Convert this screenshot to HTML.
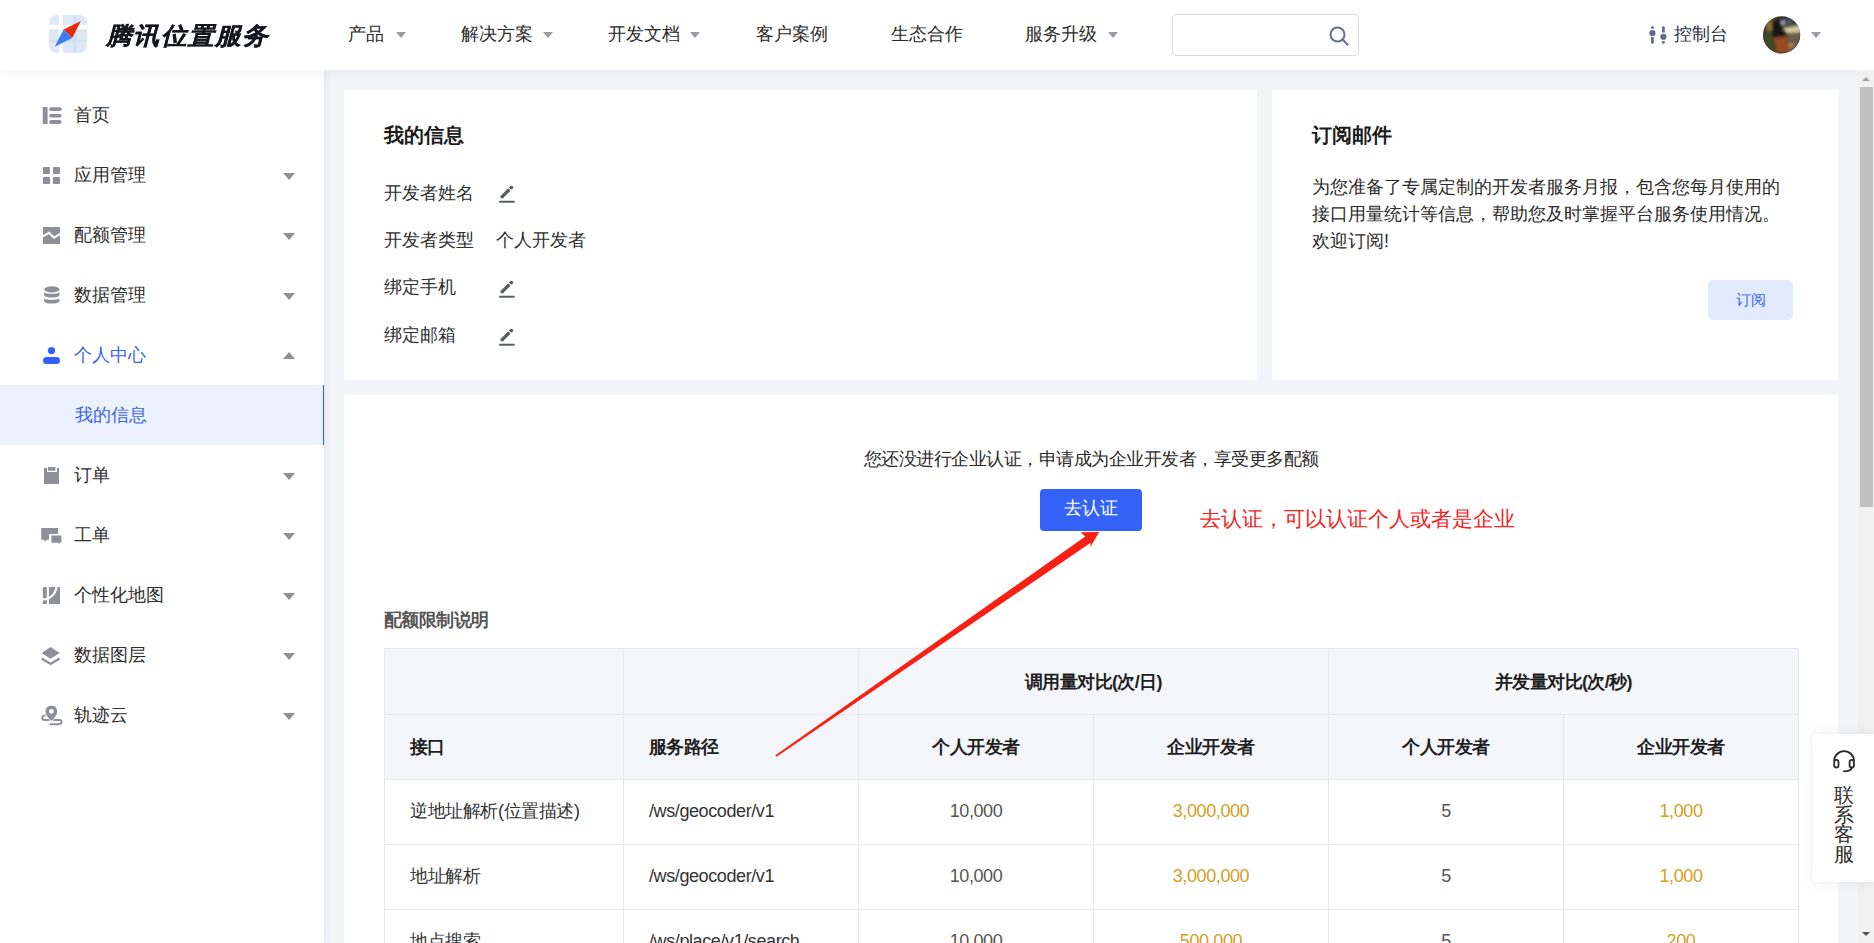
<!DOCTYPE html>
<html><head><meta charset="utf-8">
<style>
*{box-sizing:border-box;margin:0;padding:0}
html,body{width:1874px;height:943px;overflow:hidden}
body{font-family:"Liberation Sans",sans-serif;background:#f4f5f9;color:#222;position:relative}
.abs{position:absolute}
#hdr{position:absolute;left:0;top:0;width:1874px;height:70px;background:#fff;z-index:5;box-shadow:0 2px 12px rgba(30,40,80,.06)}
.nav{position:absolute;top:22px;font-size:18px;line-height:24px;color:#2a2a2a;white-space:nowrap}
.caret{position:absolute;width:0;height:0;border-left:5px solid transparent;border-right:5px solid transparent;border-top:6px solid #9a9ca3}
#side{position:absolute;left:0;top:70px;width:324px;height:873px;background:#fff;box-shadow:1px 0 3px rgba(40,50,90,.05),3px 0 8px rgba(40,50,90,.04)}
.si{position:absolute;left:0;width:324px;height:60px}
.si .t{position:absolute;left:74px;top:19px;font-size:18px;line-height:24px;color:#2e2e2e;white-space:nowrap}
.si .ic{position:absolute;left:42px;top:20px;width:20px;height:20px;overflow:visible}
.si .ca{position:absolute;left:283px;top:28.5px;width:0;height:0;border-left:6px solid transparent;border-right:6px solid transparent;border-top:7px solid #8f9197}
.card{position:absolute;background:#fff}
.t18{font-size:18px;line-height:24px;white-space:nowrap;position:absolute;color:#2e2e2e}
table{border-collapse:collapse;position:absolute;left:40px;top:253px;table-layout:fixed}
td,th{border:1px solid #e6e8ef;height:65px;font-size:18px;white-space:nowrap;letter-spacing:-0.4px}
th{letter-spacing:-0.6px}
th{background:#f5f6fa;font-weight:bold;color:#1f1f1f}
td{color:#333;padding-bottom:2px}
.num{text-align:center;color:#555}
.gold{text-align:center;color:#d4a024}
.l{text-align:left;padding-left:25px}
</style></head><body>
<div id="hdr">
  <svg class="abs" style="left:49px;top:15px" width="38" height="38" viewBox="0 0 38 38">
    <defs><linearGradient id="lg" x1="0" y1="1" x2="1" y2="0"><stop offset="0" stop-color="#e6e4f8"/><stop offset="1" stop-color="#d6ecf7"/></linearGradient>
    <clipPath id="lc"><rect x="0" y="0" width="38" height="38" rx="7.5"/></clipPath></defs>
    <g clip-path="url(#lc)">
    <rect x="0" y="0" width="38" height="38" fill="url(#lg)"/>
    <rect x="9.9" y="0" width="4.2" height="38" fill="#fbfcfe"/>
    <rect x="0" y="9.8" width="38" height="4.2" fill="#fbfcfe"/>
    <rect x="24.4" y="0" width="2.8" height="38" fill="#cddcf8"/>
    <rect x="0" y="24.8" width="38" height="2.1" fill="#c9e6f0"/>
    <rect x="24.4" y="24.8" width="2.8" height="2.1" fill="#c6e2f2"/>
    </g>
    <path d="M31.9 5.9 L14.6 14.5 L23.2 22.9 Z" fill="#e8290e"/>
    <path d="M5.7 31.8 L14.6 14.5 L23.2 22.9 Z" fill="#3f7ef8"/>
  </svg>
  <div class="abs" style="left:106px;top:20px;font-size:24px;line-height:32px;font-weight:bold;font-style:italic;color:#15171c;letter-spacing:1.5px;transform:scaleX(1.07);transform-origin:0 0;-webkit-text-stroke:0.2px #15171c;white-space:nowrap">腾讯位置服务</div>
  <div class="nav" style="left:348px">产品</div><div class="caret" style="left:396px;top:32px"></div>
  <div class="nav" style="left:461px">解决方案</div><div class="caret" style="left:543px;top:32px"></div>
  <div class="nav" style="left:608px">开发文档</div><div class="caret" style="left:690px;top:32px"></div>
  <div class="nav" style="left:756px">客户案例</div>
  <div class="nav" style="left:891px">生态合作</div>
  <div class="nav" style="left:1025px">服务升级</div><div class="caret" style="left:1108px;top:32px"></div>
  <div class="abs" style="left:1172px;top:14px;width:187px;height:42px;border:1px solid #d9dbe3;border-radius:4px"></div>
  <svg class="abs" style="left:1329px;top:26px" width="20" height="20" viewBox="0 0 20 20"><circle cx="8.5" cy="8.5" r="7" fill="none" stroke="#687190" stroke-width="2"/><path d="M13.5 13.5 L18.5 18.5" stroke="#687190" stroke-width="2.3" stroke-linecap="round"/></svg>
  <svg class="abs" style="left:1648px;top:25px" width="20" height="20" viewBox="0 0 20 20">
    <path d="M3.05 3.8 V1.9 L4.4 0.9 L5.75 1.9 V3.8 Z" fill="#636b82"/><circle cx="4.4" cy="8" r="3.1" fill="#636b82"/><path d="M3.05 12.1 H5.75 V18 L4.4 19.1 L3.05 18 Z" fill="#636b82"/>
    <path d="M14.05 7.6 V1.9 L15.4 0.9 L16.75 1.9 V7.6 Z" fill="#636b82"/><circle cx="15.4" cy="11.75" r="3.1" fill="#636b82"/><path d="M14.05 16 H16.75 V18 L15.4 19.1 L14.05 18 Z" fill="#636b82"/>
  </svg>
  <div class="nav" style="left:1674px;color:#2b3040">控制台</div>
  <svg class="abs" style="left:1763px;top:16px" width="38" height="38" viewBox="0 0 38 38">
    <defs><clipPath id="av"><circle cx="18.6" cy="18.9" r="18.6"/></clipPath><filter id="bl" x="-20%" y="-20%" width="140%" height="140%"><feGaussianBlur stdDeviation="1.6"/></filter></defs>
    <g clip-path="url(#av)"><rect x="0" y="0" width="38" height="38" fill="#3b3128"/>
    <g filter="url(#bl)">
      <path d="M0 18 L10 16 L12 38 L0 38 Z" fill="#3c4a22"/>
      <path d="M2 6 L14 2 L12 14 L4 16 Z" fill="#8a7030"/>
      <path d="M9 4 L24 2 L26 22 L14 26 L9 20 Z" fill="#141414"/>
      <path d="M11 22 L24 20 L26 36 L14 38 Z" fill="#9a4a24"/>
      <path d="M24 18 L38 14 L38 38 L26 38 Z" fill="#6a5c4a"/>
      <path d="M20 12 L38 9 L38 16 L24 17 Z" fill="#d8cc98"/>
      <circle cx="21" cy="6.5" r="2.6" fill="#e8f0ff"/><circle cx="26.5" cy="6" r="1.8" fill="#c8d4f0"/>
      <path d="M20 0 L38 0 L38 9 L20 10 Z" fill="#3a4050" opacity="0.7"/>
      <circle cx="28" cy="29" r="2" fill="#e09050"/>
    </g></g>
  </svg>
  <div class="caret" style="left:1811px;top:32px;border-top-color:#9a9ca3"></div>
</div>

<div id="side">
  <div class="si" style="top:14px"><svg class="ic" viewBox="0 0 20 20" style="left:42px;top:22px">
    <rect x="0.75" y="1" width="4.85" height="17" rx="0.5" fill="#8f9097"/>
    <rect x="7.2" y="1.3" width="12.5" height="3.8" rx="1.9" fill="#8f9097"/>
    <rect x="7.2" y="8" width="12.5" height="3.6" rx="1.8" fill="#8f9097"/>
    <rect x="7.2" y="14.1" width="12.5" height="3.9" rx="1.9" fill="#8f9097"/></svg>
    <div class="t">首页</div></div>
  <div class="si" style="top:74px"><svg class="ic" viewBox="0 0 20 20" style="left:42px;top:22px">
    <rect x="1" y="1" width="7" height="7" rx="0.8" fill="#8f9097"/><rect x="11" y="1" width="7" height="7" rx="0.8" fill="#8f9097"/>
    <rect x="1" y="11" width="7" height="7" rx="0.8" fill="#8f9097"/><rect x="11" y="11" width="7" height="7" rx="0.8" fill="#8f9097"/></svg>
    <div class="t">应用管理</div><div class="ca"></div></div>
  <div class="si" style="top:134px"><svg class="ic" viewBox="0 0 20 20" style="left:42px;top:22px">
    <rect x="1" y="1" width="17" height="17" fill="#8f9097"/>
    <path d="M-0.5 11.2 L7 6.8 L12 11.6 L19.5 7.2" fill="none" stroke="#fff" stroke-width="2.1"/></svg>
    <div class="t">配额管理</div><div class="ca"></div></div>
  <div class="si" style="top:194px"><svg class="ic" viewBox="0 0 20 20" style="left:42px;top:22px">
    <ellipse cx="9.8" cy="3.4" rx="7.6" ry="3.1" fill="#8f9097"/>
    <path d="M2.1 5.9 C3 8.4 16.6 8.4 17.5 5.9 V9.2 C16.6 12.4 3 12.4 2.1 9.2 Z" fill="#8f9097"/>
    <path d="M2.1 12.1 C3 14.6 16.6 14.6 17.5 12.1 V15.2 C16.6 18.4 3 18.4 2.1 15.2 Z" fill="#8f9097"/></svg>
    <div class="t">数据管理</div><div class="ca"></div></div>
  <div class="si" style="top:254px"><svg class="ic" viewBox="0 0 20 20" style="left:42px;top:22px">
    <circle cx="9.5" cy="4.6" r="3.6" fill="#3360fa"/>
    <rect x="1" y="11" width="17" height="7" rx="3.5" fill="#3360fa"/></svg>
    <div class="t" style="color:#3b63f0">个人中心</div><div class="ca" style="top:27.5px;border-top:0;border-bottom:7px solid #8f9197"></div></div>
  <div class="si" style="top:315px;background:#ebf1fd;border-right:1px solid #335cff"><div class="t" style="left:75px;top:18px;color:#3b63e8">我的信息</div></div>
  <div class="si" style="top:374px"><svg class="ic" viewBox="0 0 20 20" style="left:42px;top:22px">
    <path d="M2 2 H5 V6 H15 V2 H17 V18 H2 Z" fill="#8f9097"/>
    <rect x="6" y="1" width="7.4" height="3.7" fill="#8f9097"/></svg>
    <div class="t">订单</div><div class="ca"></div></div>
  <div class="si" style="top:434px"><svg class="ic" viewBox="0 0 20 20" style="left:42px;top:22px">
    <path d="M-0.8 2 H16 V8 H7 V13.7 H5 L2.4 16 V13.7 H-0.8 Z" fill="#8f9097"/>
    <path d="M9.4 9.6 H19.4 V16.7 H17.7 V18 L16 16.7 H9.4 Z" fill="#8f9097"/></svg>
    <div class="t">工单</div><div class="ca"></div></div>
  <div class="si" style="top:494px"><svg class="ic" viewBox="0 0 20 20" style="left:42px;top:22px">
    <rect x="0.8" y="1" width="4" height="17" fill="#8f9097"/>
    <rect x="6.9" y="1" width="11.1" height="17" fill="#8f9097"/>
    <path d="M14.4 0 C14.4 7 9 13 0 13.7" fill="none" stroke="#fff" stroke-width="2.2"/></svg>
    <div class="t">个性化地图</div><div class="ca"></div></div>
  <div class="si" style="top:554px"><svg class="ic" viewBox="0 0 20 20" style="left:42px;top:22px">
    <path d="M8.6 1 L17.7 6.9 L8.6 12.8 L-0.3 6.9 Z" fill="#8f9097"/>
    <path d="M-0.2 12.6 L8.6 17.9 L17.6 12.6" fill="none" stroke="#8f9097" stroke-width="2.3" stroke-linejoin="miter"/></svg>
    <div class="t">数据图层</div><div class="ca"></div></div>
  <div class="si" style="top:614px"><svg class="ic" viewBox="0 0 20 20" style="left:42px;top:22px">
    <path d="M9.35 15 C6.5 12 3.5 9 3.5 5.25 A5.85 5.85 0 0 1 15.2 5.25 C15.2 9 12.2 12 9.35 15 Z M9.4 2.9 A2.4 2.4 0 1 0 9.4 7.7 A2.4 2.4 0 1 0 9.4 2.9 Z" fill="#8f9097" fill-rule="evenodd"/>
    <path d="M3.6 9.4 C1.4 9.4 0.2 10.8 0.2 12 C0.2 13.2 1.2 14 2.4 14 H7.4" fill="none" stroke="#8f9097" stroke-width="1.9"/>
    <path d="M12.1 14 H17.4 C18.7 14 19.6 15 19.6 16.1 C19.6 17.2 18.7 18.2 17.4 18.2 H8.4" fill="none" stroke="#8f9097" stroke-width="1.9" stroke-linecap="round"/></svg>
    <div class="t">轨迹云</div><div class="ca"></div></div>
</div>

<div class="card" style="left:344px;top:90px;width:913px;height:290px">
  <div class="abs" style="left:40px;top:32px;font-size:20px;line-height:26px;font-weight:bold;color:#1b1b1b">我的信息</div>
  <div class="t18" style="left:40px;top:91px">开发者姓名</div>
  <div class="t18" style="left:40px;top:138px">开发者类型</div>
  <div class="t18" style="left:152px;top:138px">个人开发者</div>
  <div class="t18" style="left:40px;top:185px">绑定手机</div>
  <div class="t18" style="left:40px;top:233px">绑定邮箱</div>
  <svg class="abs" style="left:154px;top:94px" width="20" height="20" viewBox="0 0 20 20"><path d="M4 12.8 L11.3 5.5" stroke="#5a5d63" stroke-width="3.3"/><circle cx="4" cy="12.8" r="1.65" fill="#5a5d63"/><path d="M12.1 4.7 L13.9 2.9" stroke="#5a5d63" stroke-width="3.3"/><circle cx="13.6" cy="3.2" r="1.5" fill="#5a5d63"/><rect x="1" y="16.8" width="15.8" height="1.9" rx="0.95" fill="#5a5d63"/></svg><svg class="abs" style="left:154px;top:189px" width="20" height="20" viewBox="0 0 20 20"><path d="M4 12.8 L11.3 5.5" stroke="#5a5d63" stroke-width="3.3"/><circle cx="4" cy="12.8" r="1.65" fill="#5a5d63"/><path d="M12.1 4.7 L13.9 2.9" stroke="#5a5d63" stroke-width="3.3"/><circle cx="13.6" cy="3.2" r="1.5" fill="#5a5d63"/><rect x="1" y="16.8" width="15.8" height="1.9" rx="0.95" fill="#5a5d63"/></svg><svg class="abs" style="left:154px;top:237px" width="20" height="20" viewBox="0 0 20 20"><path d="M4 12.8 L11.3 5.5" stroke="#5a5d63" stroke-width="3.3"/><circle cx="4" cy="12.8" r="1.65" fill="#5a5d63"/><path d="M12.1 4.7 L13.9 2.9" stroke="#5a5d63" stroke-width="3.3"/><circle cx="13.6" cy="3.2" r="1.5" fill="#5a5d63"/><rect x="1" y="16.8" width="15.8" height="1.9" rx="0.95" fill="#5a5d63"/></svg>
</div>

<div class="card" style="left:1272px;top:90px;width:566px;height:290px">
  <div class="abs" style="left:40px;top:32px;font-size:20px;line-height:26px;font-weight:bold;color:#1b1b1b">订阅邮件</div>
  <div class="abs" style="left:40px;top:84px;width:475px;font-size:18px;line-height:27px;color:#2a2a2a">为您准备了专属定制的开发者服务月报，包含您每月使用的接口用量统计等信息，帮助您及时掌握平台服务使用情况。欢迎订阅!</div>
  <div class="abs" style="left:436px;top:190px;width:85px;height:40px;background:#e1ebfd;border-radius:5px;color:#3a62f5;font-size:15px;line-height:40px;text-align:center">订阅</div>
</div>

<div class="card" style="left:344px;top:395px;width:1494px;height:548px">
  <div class="abs" style="left:0;top:52px;width:1494px;text-align:center;font-size:18px;letter-spacing:-0.5px;line-height:24px;color:#2a2a2a">您还没进行企业认证，申请成为企业开发者，享受更多配额</div>
  <div class="abs" style="left:696px;top:94px;width:102px;height:42px;background:#3562f6;border-radius:4px;color:#fff;font-size:18px;line-height:39px;text-align:center">去认证</div>
  <div class="abs" style="left:40px;top:213px;font-size:18px;line-height:24px;font-weight:bold;color:#555;letter-spacing:-0.6px;top:212.5px">配额限制说明</div>
  <div class="abs" style="left:856px;top:111px;font-size:21px;line-height:26px;color:#f5231d;white-space:nowrap">去认证，可以认证个人或者是企业</div>
  <table style="left:40px;top:253px">
    <colgroup><col style="width:239px"><col style="width:235px"><col style="width:235px"><col style="width:235px"><col style="width:235px"><col style="width:235px"></colgroup>
    <tr><th style="height:66px"></th><th></th><th colspan="2">调用量对比(次/日)</th><th colspan="2">并发量对比(次/秒)</th></tr>
    <tr><th class="l">接口</th><th class="l">服务路径</th><th>个人开发者</th><th>企业开发者</th><th>个人开发者</th><th>企业开发者</th></tr>
    <tr><td class="l">逆地址解析(位置描述)</td><td class="l">/ws/geocoder/v1</td><td class="num">10,000</td><td class="gold">3,000,000</td><td class="num">5</td><td class="gold">1,000</td></tr>
    <tr><td class="l">地址解析</td><td class="l">/ws/geocoder/v1</td><td class="num">10,000</td><td class="gold">3,000,000</td><td class="num">5</td><td class="gold">1,000</td></tr>
    <tr><td class="l">地点搜索</td><td class="l">/ws/place/v1/search</td><td class="num">10,000</td><td class="gold">500,000</td><td class="num">5</td><td class="gold">200</td></tr>
  </table>
</div>

<svg class="abs" style="left:0;top:0;z-index:3" width="1874" height="943" viewBox="0 0 1874 943">
  <path d="M775.5 755.2 L1085.3 536.6 L1080.7 532.3 L1099.2 532 L1090.3 547.2 L1090.6 542.8 L776.5 756.8 Z" fill="#f81f13"/>
</svg>
<div class="abs" style="left:1858px;top:70px;width:16px;height:873px;background:#f1f1f1;z-index:6">
  <div class="abs" style="left:4px;top:6.5px;width:0;height:0;border-left:4px solid transparent;border-right:4px solid transparent;border-bottom:4px solid #a3a3a3"></div>
  <div class="abs" style="left:2px;top:17px;width:13px;height:420px;background:#c1c1c1"></div>
  <div class="abs" style="left:4px;top:862px;width:0;height:0;border-left:4px solid transparent;border-right:4px solid transparent;border-top:4px solid #505050"></div>
</div>
<div class="abs" style="left:1813px;top:734px;width:61px;height:148px;background:#fff;z-index:7;box-shadow:0 0 12px rgba(0,0,0,.08)">
  <svg class="abs" style="left:19px;top:15px" width="26" height="26" viewBox="0 0 26 26"><path d="M2.2 12 A9.9 9.9 0 0 1 22 12" fill="none" stroke="#2b2b2b" stroke-width="1.8"/><rect x="2.2" y="10.8" width="4.3" height="7.7" rx="2.1" fill="none" stroke="#2b2b2b" stroke-width="1.8"/><rect x="17.6" y="10.8" width="4.3" height="7.7" rx="2.1" fill="none" stroke="#2b2b2b" stroke-width="1.8"/><path d="M19.8 18.8 C19.2 21.4 16.8 22.4 11.2 22.4" fill="none" stroke="#2b2b2b" stroke-width="1.9"/></svg>
  <div class="abs" style="left:20px;top:52px;width:22px;font-size:20px;line-height:19.5px;color:#2d2d2d;text-align:center">联系客服</div>
</div>
</body></html>
